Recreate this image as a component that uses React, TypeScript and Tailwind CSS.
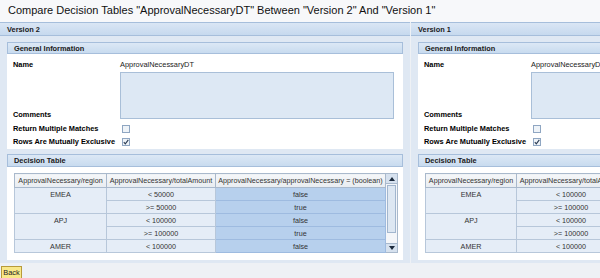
import React from "react";

const rows = [
  { region: "EMEA", span: 2, amount: "< 50000", val: "false" },
  { region: null, span: 0, amount: ">= 50000", val: "true" },
  { region: "APJ", span: 2, amount: "< 100000", val: "false" },
  { region: null, span: 0, amount: ">= 100000", val: "true" },
  { region: "AMER", span: 1, amount: "< 100000", val: "false" },
];

const rows1 = [
  { region: "EMEA", span: 2, amount: "< 100000", val: "false" },
  { region: null, span: 0, amount: ">= 100000", val: "true" },
  { region: "APJ", span: 2, amount: "< 100000", val: "false" },
  { region: null, span: 0, amount: ">= 100000", val: "true" },
  { region: "AMER", span: 1, amount: "< 100000", val: "false" },
];

function CheckBox({ checked }: { checked?: boolean }) {
  return (
    <div className="w-[8px] h-[8px] border border-[#8fa6c2] bg-[#eef3f8] flex items-center justify-center">
      {checked && (
        <svg width="6" height="6" viewBox="0 0 6 6">
          <path d="M0.8 3.2 L2.3 4.8 L5.3 0.8" stroke="#2a3a52" strokeWidth="1.1" fill="none" />
        </svg>
      )}
    </div>
  );
}

function SectionHeader({ title }: { title: string }) {
  return (
    <div className="h-[12px] border border-[#a6bedb] bg-gradient-to-b from-[#dce8f5] to-[#c8dbef] pl-[6px] flex items-center text-[7.4px] leading-[9px] font-bold text-[#1a1a1a]">
      {title}
    </div>
  );
}

function Scrollbar() {
  return (
    <div className="w-[12px] h-[80px] flex-none flex flex-col border border-l-0 border-[#a9b9cc] bg-[#f4f6f9]">
      <div className="h-[10px] flex items-center justify-center bg-[#d6e1ee] border-b border-[#a9b9cc]">
        <svg width="6" height="4" viewBox="0 0 6 4"><path d="M0 4 L3 0 L6 4 Z" fill="#1c2a3c" /></svg>
      </div>
      <div className="h-[48px] mx-[1px] mt-[1px] bg-[#dde7f2] border border-[#a2b6ce]" />
      <div className="flex-1" />
      <div className="h-[9px] flex items-center justify-center bg-[#d6e1ee] border-t border-[#a9b9cc]">
        <svg width="6" height="4" viewBox="0 0 6 4"><path d="M0 0 L6 0 L3 4 Z" fill="#1c2a3c" /></svg>
      </div>
    </div>
  );
}

function DecisionTable({ data, c1 }: { data: typeof rows; c1: number }) {
  const th = "h-[14px] border border-[#a9b9cc] bg-gradient-to-b from-[#f5f7f9] to-[#e8ecf1] text-[#333] font-normal px-0 whitespace-nowrap overflow-hidden";
  const td = "h-[13px] border border-[#b7c7da] bg-[#e5edf7] text-[#333] text-center whitespace-nowrap";
  const td3 = "h-[13px] border border-[#9ebbe0] bg-[#b7d0ed] text-[#333] text-center whitespace-nowrap";
  return (
    <div className="flex">
      <table className="border-collapse table-fixed w-[371px] flex-none text-[7.2px] leading-[9px]">
        <colgroup>
          <col style={{ width: c1 }} />
          <col className="w-[109px]" />
          <col className="w-[170px]" />
        </colgroup>
        <thead>
          <tr>
            <th className={th}>ApprovalNecessary/region</th>
            <th className={th}>ApprovalNecessary/totalAmount</th>
            <th className={th}>ApprovalNecessary/approvalNecessary = (boolean)</th>
          </tr>
        </thead>
        <tbody>
          {data.map((r, i) => (
            <tr key={i}>
              {r.region !== null && (
                <td rowSpan={r.span} className={td + " align-top pt-[2px]"}>
                  {r.region}
                </td>
              )}
              <td className={td}>{r.amount}</td>
              <td className={td3}>{r.val}</td>
            </tr>
          ))}
        </tbody>
      </table>
      <Scrollbar />
    </div>
  );
}

function Panel({ title, data, c1, extra }: { title: string; data: typeof rows; c1: number; extra?: string }) {
  return (
    <div className={"w-[410px] flex-none bg-[#dfe8f3] " + (extra || "")}>
      <div className="h-[14px] border-y border-[#a6bedb] bg-gradient-to-b from-[#dae6f4] to-[#c6d9ee] pl-[7px] flex items-center text-[7.4px] leading-[9px] font-bold text-[#1a1a1a]">
        {title}
      </div>
      <div className="px-[7px] pt-[6px] pb-[3px]">
        <SectionHeader title="General Information" />
        <div className="bg-white h-[95px] pl-[6px] pt-[6px] text-[7.4px] leading-[9px]">
          <div className="flex h-[9px]">
            <div className="w-[107px] flex-none font-bold text-black">Name</div>
            <div className="text-[#222] whitespace-nowrap">ApprovalNecessaryDT</div>
          </div>
          <div className="flex mt-[3px] h-[47px]">
            <div className="w-[107px] flex-none font-bold text-black flex items-end">Comments</div>
            <div className="w-[274px] flex-none h-[47px] bg-[#dde8f4] border border-[#a9bfd8]" />
          </div>
          <div className="flex mt-[5px] h-[9px] items-center">
            <div className="w-[109px] flex-none font-bold text-black">Return Multiple Matches</div>
            <CheckBox />
          </div>
          <div className="flex mt-[4px] h-[9px] items-center">
            <div className="w-[109px] flex-none font-bold text-black">Rows Are Mutually Exclusive</div>
            <CheckBox checked />
          </div>
        </div>
        <div className="h-[5px]" />
        <div className="h-[13px] border border-[#a6bedb] bg-gradient-to-b from-[#dce8f5] to-[#c8dbef] pl-[6px] flex items-center text-[7.4px] leading-[9px] font-bold text-[#1a1a1a]">
          Decision Table
        </div>
        <div className="bg-white h-[93px] pl-[7px] pt-[6px]">
          <DecisionTable data={data} c1={c1} />
        </div>
      </div>
    </div>
  );
}

export default function App() {
  return (
    <div className="w-[600px] h-[278px] overflow-hidden bg-[#eef1f5] font-['Liberation_Sans',Arial,sans-serif]">
      <div className="h-[22px] bg-[#f7f8fa] pl-[8px] pt-[3px] text-[11px] leading-[14px] text-[#111] whitespace-nowrap">
        Compare Decision Tables "ApprovalNecessaryDT" Between "Version 2" And "Version 1"
      </div>
      <div className="flex w-[830px]">
        <Panel title="Version 2" data={rows} c1={92} />
        <Panel title="Version 1" data={rows1} c1={91} extra="ml-[1px]" />
      </div>
      <div className="pl-[1px] pt-[3px]">
        <button className="h-[13px] w-[21px] border border-[#b89b3a] bg-[#f9e889] text-[7.4px] leading-[11px] text-[#222] flex items-center justify-center">
          Back
        </button>
      </div>
    </div>
  );
}
